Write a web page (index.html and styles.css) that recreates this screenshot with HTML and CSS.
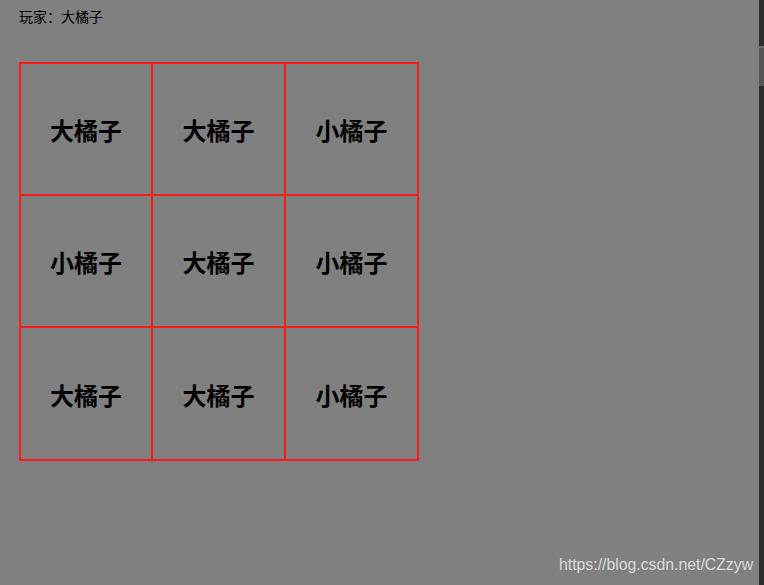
FILE: index.html
```html
<!DOCTYPE html>
<html lang="zh">
<head>
<meta charset="utf-8">
<title>玩家</title>
<link rel="stylesheet" href="styles.css">
</head>
<body>
<div class="page">
  <p class="player">玩家：大橘子</p>
  <div class="board">
    <div class="cell">大橘子</div>
    <div class="cell">大橘子</div>
    <div class="cell">小橘子</div>
    <div class="cell">小橘子</div>
    <div class="cell">大橘子</div>
    <div class="cell">小橘子</div>
    <div class="cell">大橘子</div>
    <div class="cell">大橘子</div>
    <div class="cell">小橘子</div>
  </div>
</div>
<div class="watermark">https://blog.csdn.net/CZzyw</div>
<div class="scrollbar"><div class="scroll-thumb"></div></div>
</body>
</html>
```

FILE: styles.css
```css
html, body {
  margin: 0;
  padding: 0;
  width: 764px;
  height: 585px;
  overflow: hidden;
  background: #808080;
}
body {
  font-family: "Noto Sans CJK SC", "Microsoft YaHei", sans-serif;
  color: #000;
  position: relative;
}
.page {
  padding: 6px 0 0 19px;
}
.player {
  margin: 0;
  font-size: 14px;
  line-height: 20px;
}
.board {
  margin-top: 36px;
  width: max-content;
  padding: 2px;
  background: #ff1a1a;
  display: grid;
  grid-template-columns: 130px 131px 131px;
  grid-template-rows: 130px 130px 131px;
  gap: 2px;
}
.cell {
  background: #808080;
  display: flex;
  align-items: center;
  justify-content: center;
  font-size: 24px;
  font-weight: bold;
  padding-top: 1px;
}
.watermark {
  position: absolute;
  left: 559px;
  top: 554px;
  font-family: "Liberation Sans", Arial, sans-serif;
  font-size: 15.8px;
  line-height: 22px;
  color: #dadada;
  white-space: nowrap;
}
.scrollbar {
  position: absolute;
  right: 0;
  top: 0;
  width: 5px;
  height: 585px;
  background: #2c2d31;
}
.scroll-thumb {
  margin-top: 46px;
  height: 38px;
  background: #55565a;
  border-top: 2px solid #6a6b6f;
}
```
